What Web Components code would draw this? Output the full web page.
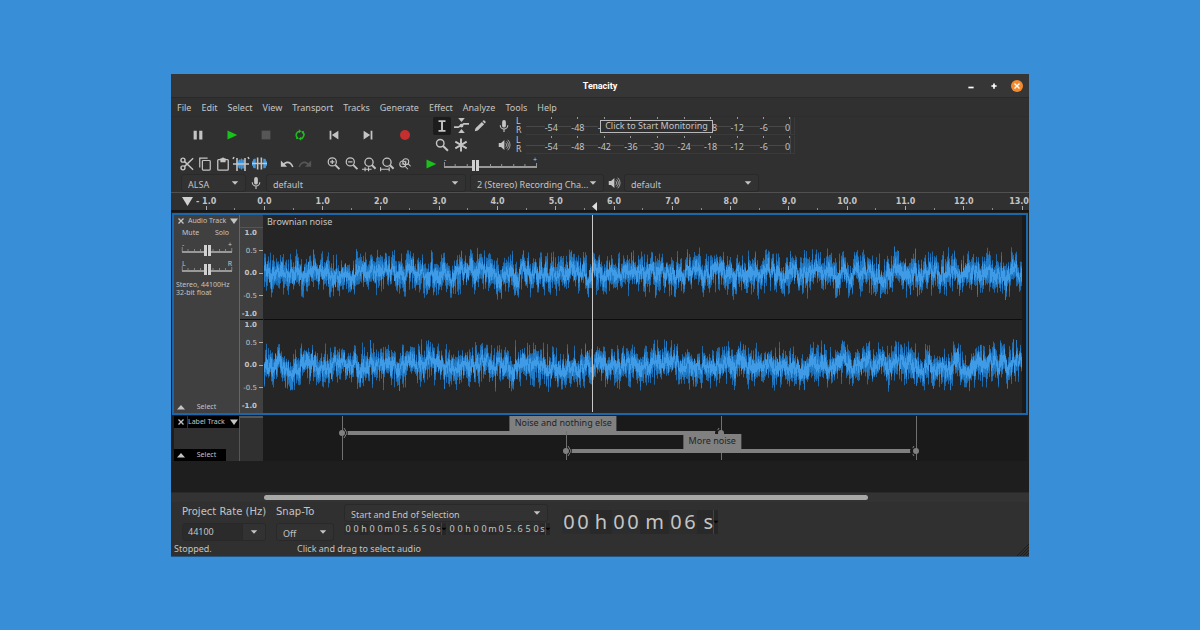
<!DOCTYPE html>
<html lang="en">
<head>
<meta charset="utf-8">
<meta name="viewport" content="width=device-width, initial-scale=1">
<title>Tenacity</title>
<style>
    * { box-sizing: border-box; }
    body {
        margin: 0;
        min-height: 100vh;
        display: flex;
        align-items: center;
        justify-content: center;
        background: #398fd7;
        font-family: "Noto Sans", "DejaVu Sans", sans-serif;
        font-size: 9px;
        line-height: 12px;
        color: #c4c4c4;
    }
    app-window { width: 71.5%; }
</style>
</head>
<body>
<app-window>
    <title-bar slot="title">Tenacity</title-bar>
    <menu-bar items="File,Edit,Select,View,Transport,Tracks,Generate,Effect,Analyze,Tools,Help"></menu-bar>
    <tool-area></tool-area>
    <time-ruler from="-1" to="13"></time-ruler>
    <track-area>
        <audio-track name="Audio Track" clip="Brownian noise"></audio-track>
        <label-track name="Label Track"></label-track>
    </track-area>
    <selection-bar></selection-bar>
    <status-bar state="Stopped.">Click and drag to select audio</status-bar>
</app-window>

<script>
// Icons are drawn on a 16x16 grid
const ICONS = {
    pause: '<path d="M3 3h3.6v10H3zM9.4 3H13v10H9.4z"/>',
    play: '<path d="M2 2v12L15 8z"/>',
    stop: '<path d="M3 3h10v10H3z"/>',
    loop: '<g fill="none" stroke="currentColor" stroke-width="2"><path d="M7.500 3A5.300 5.300 0 0 0 4.500 12.200M8.500 13A5.300 5.300 0 0 0 11.500 3.800"/></g><path d="M6.500 .3v5.400L9.800 3zM9.500 15.700v-5.400L6.200 13z"/><path d="M2.500 13.500l4-.5-2-3.500zM13.500 2.500l-4 .5 2 3.500z"/>',
    start: '<path d="M3 3h2v10H3zM13 3v10L5.500 8z"/>',
    end: '<path d="M11 3h2v10h-2zM3 3v10l7.500-5z"/>',
    record: '<circle cx="8" cy="8" r="5.700"/>',
    ibeam: '<path d="M4 1.500h8v2H9.100v9H12v2H4v-2h2.900v-9H4z"/>',
    envelope: '<path d="M4.500 0h7L8 4.200zM4.500 16h7L8 11.800z"/><path d="M0 9.800h4.500l6-3.600H16" fill="none" stroke="currentColor" stroke-width="1.800"/><circle cx="8" cy="8" r="2"/>',
    pencil: '<path d="M1 15l1-4 8.500-8.500 3 3L5 14zM11.300 1.700l1-1q.8-.7 1.600 0l1.400 1.400q.7.8 0 1.600l-1 1z"/>',
    zoom: '<circle cx="6" cy="6" r="4.300" fill="none" stroke="currentColor" stroke-width="1.600"/><path d="M9.200 9.200l5.600 5.300" stroke="currentColor" stroke-width="2.300"/>',
    multi: '<path d="M8 .5v15M1.500 4.200l13 7.600M1.500 11.800l13-7.600" stroke="currentColor" stroke-width="2.200"/>',
    mic: '<rect x="5.500" y="0" width="5" height="10" rx="2.500"/><path d="M3 7a5 5 0 0 0 10 0M8 12v4" fill="none" stroke="currentColor" stroke-width="1.500"/>',
    speaker: '<path d="M1 5.300h3l4.500-4v13.400l-4.500-4H1z"/><path d="M10 5a4 4 0 0 1 0 6M11.500 3a6.500 6.500 0 0 1 0 10M13 1a9.500 9.500 0 0 1 0 14" fill="none" stroke="currentColor" stroke-width="1"/>',
    cut: '<g fill="none" stroke="currentColor" stroke-width="1.600"><circle cx="3.400" cy="3.600" r="2.300"/><circle cx="3.400" cy="12.400" r="2.300"/><path d="M5 5l10 9.500M5 11l10-9.500"/></g>',
    copy: '<g fill="none" stroke="currentColor" stroke-width="1.400"><path d="M2 12V1.200h9"/><rect x="5" y="4" width="9" height="11" rx="1"/></g>',
    paste: '<g fill="none" stroke="currentColor" stroke-width="1.500"><rect x="2" y="3" width="12" height="12" rx="1"/></g><path d="M5 1.500h1.500a1.600 1.600 0 0 1 3 0H11V6H5z"/>',
    trim: '<path d="M5 6h1V4h1v2h1V3h1v3h1V4h1v8h-1v-2H9v3H8v-3H7v2H6v-2H5z" fill="#3d98e3" stroke="#3d98e3"/><path d="M0 8h16M4 2v13M12 2v13M1 1l-1 2M15 1l1 2" stroke="currentColor" stroke-width="1.600"/>',
    silence: '<path d="M0 6l1-1V4l1-1h2v10H2l-1-1v-1l-1-1zM16 6l-1-1V4l-1-1h-2v10h2l1-1v-1l1-1z" fill="#3d98e3"/><path d="M0 8h16M6 1.500v13M10 1.500v13" stroke="currentColor" stroke-width="1.700"/>',
    undo: '<path d="M1 4v7h7L5.500 8.400C8.500 6 12 7 13.800 11.600l1.700-.6C13 4.500 8 3.600 4 7z"/>',
    redo: '<path d="M15 4v7H8l2.500-2.600C7.500 6 4 7 2.200 11.600L.5 11C3 4.500 8 3.600 12 7z"/>',
    zoomIn: '<circle cx="6.500" cy="6" r="5" fill="none" stroke="currentColor" stroke-width="1.500"/><path d="M10.300 10l5 5" stroke="currentColor" stroke-width="2.300"/><path d="M3.800 6h5.400M6.500 3.300v5.400" stroke="currentColor" stroke-width="1.500"/>',
    zoomOut: '<circle cx="6.500" cy="6" r="5" fill="none" stroke="currentColor" stroke-width="1.500"/><path d="M10.300 10l5 5" stroke="currentColor" stroke-width="2.300"/><path d="M3.800 6h5.400" stroke="currentColor" stroke-width="1.500"/>',
    zoomSel: '<circle cx="8" cy="6" r="4.700" fill="none" stroke="currentColor" stroke-width="1.500"/><path d="M11.500 9.500l4 4" stroke="currentColor" stroke-width="2.300"/><path d="M0 14h11M3.500 11.800v4.400M7.500 11.800v4.400" stroke="currentColor" stroke-width="1.300"/>',
    zoomFit: '<circle cx="8" cy="6" r="4.700" fill="none" stroke="currentColor" stroke-width="1.500"/><path d="M11.500 9.500l4 4" stroke="currentColor" stroke-width="2.300"/><path d="M.7 14h10M.7 11.800v4.400M10.500 11.800v4.400" stroke="currentColor" stroke-width="1.300"/>',
    zoomToggle: '<g fill="none" stroke="currentColor" stroke-width="1.400"><circle cx="9" cy="5" r="4"/><circle cx="5" cy="8" r="4"/><path d="M3.500 8h3M9 3.500v4M12 7.500l3.500 3.500M8 11l4 4"/></g>',
    down: '<path d="M1.500 4.500h13L8 11.500z"/>',
    bigDown: '<path d="M0 3h16L8 14z"/>',
    up: '<path d="M0 13h16L8 4z"/>',
    close: '<path d="M3 3l10 10M13 3L3 13" stroke="currentColor" stroke-width="2.600"/>',
    minus: '<path d="M1 12h14" stroke="currentColor" stroke-width="4.500"/>',
    plus: '<path d="M1 8h14M8 1v14" stroke="currentColor" stroke-width="4.500"/>'
};

const icon = (name, size = 14) =>
    `<svg width="${size}" height="${size}" viewBox="0 0 16 16" fill="currentColor" aria-hidden="true">${ICONS[name]}</svg>`;

const RESET = `
    *, *::before, *::after { box-sizing: border-box; }
    svg { display: block; flex: none; overflow: visible; }
    button, select, input { font: inherit; color: inherit; margin: 0; border: 0; padding: 0; background: none; border-radius: 0; }
    button { display: flex; align-items: center; justify-content: center; }
`;

class BaseElement extends HTMLElement {
    connectedCallback() {
        if (this.shadowRoot) return;
        this.attachShadow({ mode: 'open' });
        this.shadowRoot.innerHTML = `<style>${RESET}</style>${this.render()}`;
    }
}

customElements.define('app-window', class extends BaseElement {
    render() {
        return `
            <style>
                :host { display: flex; flex-direction: column; background: #303030; }
            </style>
            <slot name="title"></slot>
            <slot></slot>
        `;
    }
});

customElements.define('title-bar', class extends BaseElement {
    render() {
        return `
            <style>
                :host {
                    display: grid;
                    grid-template-columns: 1fr auto 1fr;
                    align-items: center;
                    height: 24px;
                    padding: 1px 6px 0;
                    background: #363636;
                    border-bottom: 1px solid #2a2a2a;
                    color: #fff;
                }
                h1 { margin: 0; grid-column: 2; font: bold 9px/12px Roboto, "Noto Sans", sans-serif; }
                .buttons { display: flex; justify-content: flex-end; align-items: center; gap: 11px; }
                button { width: 12px; height: 12px; }
                .close { background: #f58a2c; border-radius: 50%; }
            </style>
            <h1><slot></slot></h1>
            <div class="buttons">
                <button aria-label="Minimize">${icon('minus', 6)}</button>
                <button aria-label="Maximize">${icon('plus', 6)}</button>
                <button class="close" aria-label="Close">${icon('close', 8)}</button>
            </div>
        `;
    }
});

customElements.define('menu-bar', class extends BaseElement {
    render() {
        const items = this.getAttribute('items').split(',');
        return `
            <style>
                :host { display: block; border-bottom: 1px solid #2d2d2d; }
                nav { display: flex; gap: 10px; height: 18px; padding: 2px 6px 0; align-items: center; }
            </style>
            <nav>${items.map(item => `<button>${item}</button>`).join('')}</nav>
        `;
    }
});

customElements.define('icon-button', class extends BaseElement {
    render() {
        const size = this.getAttribute('size') || 14;
        return `
            <style>
                :host { display: block; width: 18px; height: 18px; }
                :host([wide]) { width: 34px; }
                :host([active]) { background: #1c1c1c; border-radius: 2px; }
                button { width: 100%; height: 100%; }
            </style>
            <button aria-label="${this.getAttribute('label')}">${icon(this.getAttribute('icon'), size)}</button>
        `;
    }
});

customElements.define('level-meter', class extends BaseElement {
    render() {
        const marks = [-54, -48, -42, -36, -30, -24, -18, -12, -6];
        const prompt = this.getAttribute('prompt');
        // The prompt takes the place of the middle marks
        const shown = m => !prompt || m < -36 || m > -24;
        return `
            <style>
                :host { display: flex; align-items: center; height: 18px; position: relative; }
                .channels { width: 10px; margin-left: 6px; font: 8px/9px "DejaVu Sans", sans-serif; }
                .channels span { display: block; }
                .scale {
                    display: flex;
                    width: 269px;
                    height: 18px;
                    padding-left: 12px;
                    border: solid #3a3a3a;
                    border-width: 0 1px 1px 0;
                    background: linear-gradient(#484848, #484848) 0 9px / 265px 1px no-repeat;
                }
                .scale span {
                    flex: 1;
                    display: flex;
                    justify-content: center;
                    background: linear-gradient(#999, #999) 50% 0 / 1px 2px no-repeat;
                }
                .scale b { font-weight: normal; background: #303030; height: 13px; line-height: 13px; margin-top: 4px; }
                .scale .zero { flex: none; width: 14px; margin-right: 3px; justify-content: flex-end; background-position: 100% 0; border-right: 1px solid #444; }
                button {
                    position: absolute;
                    left: 102px;
                    top: 3px;
                    width: 113px;
                    height: 13px;
                    border: 1px solid #b8b8b8;
                    background: #303030;
                    white-space: nowrap;
                }
            </style>
            ${icon(this.getAttribute('icon'), 12)}
            <div class="channels"><span>L</span><span>R</span></div>
            <div class="scale">
                ${marks.map(m => `<span>${shown(m) ? `<b>${m}</b>` : ''}</span>`).join('')}
                <span class="zero"><b>0</b></span>
            </div>
            ${prompt ? `<button>${prompt}</button>` : ''}
        `;
    }
});

customElements.define('scale-slider', class extends BaseElement {
    render() {
        return `
            <style>
                :host { display: block; font-size: 7px; line-height: 7px; }
                .ends { display: flex; justify-content: space-between; height: 5px; align-items: center; }
                .rail { position: relative; height: 9px; }
                svg { position: absolute; left: 0; top: 0; width: 100%; height: 100%; }
                input {
                    -webkit-appearance: none;
                    appearance: none;
                    position: relative;
                    display: block;
                    width: 100%;
                    height: 7px;
                    overflow: visible;
                }
                input::-webkit-slider-thumb {
                    -webkit-appearance: none;
                    width: 7px;
                    height: 11px;
                    background: linear-gradient(90deg, #d0d0d0 3px, #333 3px 4px, #d0d0d0 4px);
                }
            </style>
            <div class="ends"><span>${this.getAttribute('low')}</span><span>${this.getAttribute('high')}</span></div>
            <div class="rail">
                <svg viewBox="0 0 100 9" preserveAspectRatio="none">
                    <path d="M0 5H100" stroke="#999" stroke-width="2"/>
                    <path d="M.5 0V5M99.500 1V5M12 2V5M25 2V5M37 2V5M50 2V5M62 2V5M75 2V5M87 2V5" stroke="#999" stroke-width="1"/>
                </svg>
                <input type="range" min="0" max="100" value="${this.getAttribute('value')}" aria-label="${this.getAttribute('label')}">
            </div>
        `;
    }
});

customElements.define('drop-down', class extends BaseElement {
    render() {
        const caption = this.getAttribute('caption');
        return `
            <style>
                :host { display: block; }
                label { display: block; font: 10px/15px "DejaVu Sans", sans-serif; margin-bottom: 4px; white-space: nowrap; }
                .box {
                    position: relative;
                    height: 18px;
                    border: 1px solid #292929;
                    border-radius: 3px;
                    background: #323232;
                    overflow: hidden;
                }
                select {
                    -webkit-appearance: none;
                    appearance: none;
                    width: 100%;
                    height: 100%;
                    padding: 4px 10px 0 6px;
                }
                svg { position: absolute; right: 6px; top: 4px; pointer-events: none; }
            </style>
            ${caption ? `<label for="field">${caption}</label>` : ''}
            <div class="box">
                <select id="field" ${caption ? '' : `aria-label="${this.getAttribute('label')}"`}>
                    <option>${this.getAttribute('value')}</option>
                </select>
                ${icon('down', 8)}
            </div>
        `;
    }
});

customElements.define('combo-field', class extends BaseElement {
    render() {
        return `
            <style>
                :host { display: block; }
                label { display: block; font: 10px/15px "DejaVu Sans", sans-serif; margin-bottom: 4px; white-space: nowrap; }
                .box { display: flex; height: 18px; border: 1px solid #292929; border-radius: 3px; overflow: hidden; }
                input { flex: 1; min-width: 0; padding: 0 5px; background: #2b2b2b; }
                button { width: 23px; background: #323232; border-left: 1px solid #292929; }
            </style>
            <label for="field">${this.getAttribute('caption')}</label>
            <div class="box">
                <input id="field" value="${this.getAttribute('value')}">
                <button aria-label="Choose rate">${icon('down', 8)}</button>
            </div>
        `;
    }
});

customElements.define('tool-area', class extends BaseElement {
    render() {
        return `
            <style>
                :host { display: block; padding: 0 7px; }
                .row { display: flex; align-items: center; }
                .top { height: 37px; padding-left: 3px; }
                .transport { display: flex; }
                .record { margin-left: 3px; }
                .tools { display: grid; grid-template-columns: repeat(3, 18px); gap: 1px; margin-left: 11px; }
                .meters { display: grid; gap: 1px; margin-left: 9px; }
                .edit { height: 20px; }
                .group { display: flex; margin-right: 10px; }
                .speed { width: 93px; margin-left: 4px; }
                .group.view { margin-right: 8px; }
                .devices { height: 18px; padding-left: 3px; gap: 4px; }
                .green { color: #19c219; }
                .dim { color: #565656; }
                .red { color: #c62f2f; }
            </style>
            <div class="row top">
                <div class="transport">
                    <icon-button wide icon="pause" label="Pause"></icon-button>
                    <icon-button wide icon="play" label="Play" class="green" size="12"></icon-button>
                    <icon-button wide icon="stop" label="Stop" class="dim"></icon-button>
                    <icon-button wide icon="loop" label="Loop" class="green" size="12"></icon-button>
                    <icon-button wide icon="start" label="Skip to Start"></icon-button>
                    <icon-button wide icon="end" label="Skip to End"></icon-button>
                    <icon-button wide icon="record" label="Record" class="red record"></icon-button>
                </div>
                <div class="tools">
                    <icon-button active icon="ibeam" label="Selection Tool" size="14"></icon-button>
                    <icon-button icon="envelope" label="Envelope Tool" size="15"></icon-button>
                    <icon-button icon="pencil" label="Draw Tool" size="12"></icon-button>
                    <icon-button icon="zoom" label="Zoom Tool"></icon-button>
                    <icon-button icon="multi" label="Multi Tool"></icon-button>
                </div>
                <div class="meters">
                    <level-meter icon="mic" prompt="Click to Start Monitoring"></level-meter>
                    <level-meter icon="speaker"></level-meter>
                </div>
            </div>
            <div class="row edit">
                <div class="group">
                    <icon-button icon="cut" label="Cut"></icon-button>
                    <icon-button icon="copy" label="Copy"></icon-button>
                    <icon-button icon="paste" label="Paste"></icon-button>
                    <icon-button icon="trim" label="Trim Audio" size="16"></icon-button>
                    <icon-button icon="silence" label="Silence Audio" size="15"></icon-button>
                </div>
                <div class="group">
                    <icon-button icon="undo" label="Undo"></icon-button>
                    <icon-button icon="redo" label="Redo" class="dim"></icon-button>
                </div>
                <div class="group view">
                    <icon-button icon="zoomIn" label="Zoom In" size="13"></icon-button>
                    <icon-button icon="zoomOut" label="Zoom Out" size="13"></icon-button>
                    <icon-button icon="zoomSel" label="Zoom to Selection"></icon-button>
                    <icon-button icon="zoomFit" label="Fit to Width"></icon-button>
                    <icon-button icon="zoomToggle" label="Zoom Toggle" size="12"></icon-button>
                </div>
                <icon-button icon="play" label="Play-at-Speed" class="green" size="12"></icon-button>
                <scale-slider class="speed" low="-" high="+" value="32" label="Playback Speed"></scale-slider>
            </div>
            <div class="row devices">
                <drop-down style="width: 65px" value="ALSA" label="Audio Host"></drop-down>
                ${icon('mic', 12)}
                <drop-down style="width: 200px" value="default" label="Recording Device"></drop-down>
                <drop-down style="width: 134px" value="2 (Stereo) Recording Cha..." label="Recording Channels"></drop-down>
                ${icon('speaker', 12)}
                <drop-down style="width: 135px" value="default" label="Playback Device"></drop-down>
            </div>
        `;
    }
});

customElements.define('time-ruler', class extends BaseElement {
    render() {
        const from = Number(this.getAttribute('from'));
        const to = Number(this.getAttribute('to'));
        const cells = [];
        for (let t = from; t < to; t++) {
            cells.push(`<span>${t < 0 ? '- ' : ''}${Math.abs(t).toFixed(1)}</span>`);
        }
        return `
            <style>
                :host {
                    display: flex;
                    position: relative;
                    height: 20px;
                    padding-left: 6px;
                    border-top: 1px solid #505050;
                    border-bottom: 2px solid #161616;
                    font: bold 8px/17px "DejaVu Sans", sans-serif;
                }
                span {
                    flex: 1;
                    text-align: center;
                    background:
                        linear-gradient(#aaa, #aaa) 50% 100% / 1px 4px no-repeat,
                        linear-gradient(#888, #888) 100% 100% / 1px 2px no-repeat;
                }
                .last { flex: none; width: 36px; text-align: right; background-position: 29px 100%, -9px 0; }
                .pin { position: absolute; left: 11px; top: 4px; }
                .head { position: absolute; left: 49.1%; top: 9px; color: #ddd; }
            </style>
            ${cells.join('')}
            <span class="last">${to.toFixed(1)}</span>
            <svg class="pin" width="11" height="9" viewBox="0 0 11 9" fill="#d0d0d0"><path d="M0 0h11L5.500 9z"/></svg>
            <svg class="head" width="6" height="9" viewBox="0 0 6 9" fill="currentColor"><path d="M5 0v9L0 4.500z"/></svg>
        `;
    }
});

customElements.define('track-area', class extends BaseElement {
    render() {
        return `
            <style>
                :host { display: block; background: #1e1e1e; }
                .tracks { min-height: 280px; padding: 1px 1px 0; }
                .scroll { height: 10px; padding: 2px 0 3px 93px; background: #333; border-top: 1px solid #2a2a2a; }
                .thumb { width: 79%; height: 5px; border-radius: 3px; background: #a8a8a6; }
            </style>
            <div class="tracks"><slot></slot></div>
            <div class="scroll"><div class="thumb"></div></div>
        `;
    }
});

customElements.define('track-panel', class extends BaseElement {
    render() {
        return `
            <style>
                :host {
                    display: flex;
                    flex-direction: column;
                    width: 65px;
                    background: var(--panel, #404040);
                    font-size: 7px;
                    line-height: 8px;
                }
                header { display: flex; height: 12px; background: var(--bar, #404040); }
                .close { width: 13px; }
                .name { flex: 1; justify-content: space-between; padding: 0 1px 0 0; white-space: nowrap; border-left: 1px solid var(--edge, #404040); }
                .body { flex: 1; }
                footer { display: flex; width: 52px; height: 12px; background: var(--bar, #404040); }
                .fold { width: 13px; }
                .pick { flex: 1; }
            </style>
            <header>
                <button class="close" aria-label="Close track">${icon('close', 8)}</button>
                <button class="name"><span>${this.getAttribute('name')}</span>${icon('bigDown', 8)}</button>
            </header>
            <div class="body"><slot></slot></div>
            <footer>
                <button class="fold" aria-label="Collapse">${icon('up', 8)}</button>
                <button class="pick">Select</button>
            </footer>
        `;
    }
});

customElements.define('wave-form', class extends BaseElement {
    render() {
        // Seeded generator, so each channel always gets the same noise
        let seed = Number(this.getAttribute('seed'));
        const rand = () => {
            seed = (seed * 16807) % 2147483647;
            return seed / 2147483647;
        };
        let peaks = '';
        let mids = '';
        let rms = '';
        let drift = 0;
        for (let x = 0; x < 758; x++) {
            drift = drift * 0.6 + (rand() - 0.5) * 13;
            const up = 6 + rand() * 8 + Math.pow(rand(), 4) * 14;
            const down = 6 + rand() * 8 + Math.pow(rand(), 4) * 14;
            const top = Math.max(19 + rand() * 6, 45.5 + drift - up);
            const bottom = Math.min(72 - rand() * 6, 45.5 + drift + down);
            const body = 2 + rand() * 6;
            peaks += `M${x + 0.5} ${top.toFixed(1)}V${bottom.toFixed(1)}`;
            mids += `M${x + 0.5} ${(45.5 + drift - up * 0.7).toFixed(1)}V${(45.5 + drift + down * 0.7).toFixed(1)}`;
            rms += `M${x + 0.5} ${(45.5 + drift * 0.9 - body).toFixed(1)}V${(45.5 + drift * 0.9 + body).toFixed(1)}`;
        }
        return `
            <style>
                :host { display: block; }
                svg { width: 100%; height: 91px; }
            </style>
            <svg viewBox="0 0 758 91" preserveAspectRatio="none" fill="none">
                <path d="${peaks}" stroke="#1f66a5"/>
                <path d="${mids}" stroke="#237cc7"/>
                <path d="${rms}" stroke="#3f9be6"/>
            </svg>
        `;
    }
});

customElements.define('audio-track', class extends BaseElement {
    render() {
        const scale = `
            <div class="scale">
                <b>1.0</b><span class="tick">0.5</span><b class="tick">0.0</b><span class="tick">-0.5</span><b>-1.0</b>
            </div>
        `;
        return `
            <style>
                :host {
                    display: grid;
                    grid-template-columns: 65px 24px 1fr;
                    position: relative;
                    border: 2px solid #1c66ab;
                    background: #1a1a1a;
                }
                .controls { display: grid; gap: 5px; padding: 2px 7px 0 8px; }
                .switches { display: flex; justify-content: space-between; padding-right: 3px; }
                .info { padding: 6px 2px; }
                .rulers { border-left: 1px solid #666; background: #404040; }
                .scale {
                    display: grid;
                    grid-template-rows: 10px 26fr 19fr 26fr 10px;
                    height: 91px;
                    align-items: center;
                    text-align: right;
                    font: 7px/10px "DejaVu Sans", sans-serif;
                }
                .scale > * { padding-right: 6px; }
                .tick { background: linear-gradient(#aaa, #aaa) 100% 50% / 4px 1px no-repeat; }
                .head { height: 13px; border-bottom: 1px solid #555; }
                .line { height: 1px; background: #0c0c0c; }
                .clips { margin-right: 4px; padding-left: 1px; background: #252525; }
                .clips .head { border: 0; padding-left: 3px; line-height: 13px; }
                .cursor { position: absolute; left: 49.1%; top: 0; bottom: 1px; width: 1px; background: #c8c8c8; }
                .foot { height: 2px; }
            </style>
            <track-panel name="${this.getAttribute('name')}">
                <div class="controls">
                    <div class="switches"><button>Mute</button><button>Solo</button></div>
                    <scale-slider low="-" high="+" value="50" label="Gain"></scale-slider>
                    <scale-slider low="L" high="R" value="50" label="Pan"></scale-slider>
                </div>
                <div class="info">Stereo, 44100Hz<br>32-bit float</div>
            </track-panel>
            <div class="rulers">
                <div class="head"></div>${scale}<div class="line"></div>${scale}
            </div>
            <div class="clips">
                <div class="head">${this.getAttribute('clip')}</div>
                <wave-form seed="4711"></wave-form>
                <div class="line"></div>
                <wave-form seed="90210"></wave-form>
                <div class="foot"></div>
            </div>
            <div class="cursor"></div>
        `;
    }
});

customElements.define('label-track', class extends BaseElement {
    render() {
        // start and end are percentages of the visible time span
        const labels = [
            { text: 'Noise and nothing else', start: 10.4, end: 59.9, mid: 39.3, top: 0 },
            { text: 'More noise', start: 39.7, end: 85.5, mid: 58.8, top: 18 }
        ];
        const handle = '<path d="M0 0L3 5L0 10" fill="none" stroke="currentColor"/>';
        return `
            <style>
                :host { display: grid; grid-template-columns: 65px 24px 1fr; margin: 1px 1px 0 2px; }
                track-panel { --panel: #303030; --bar: #000; --edge: #333; height: 45px; }
                .ruler { background: #303030; border: solid #555; border-width: 2px 0 0 1px; }
                .lane { position: relative; background: #1a1a1a; color: #808080; }
                .label { position: absolute; height: 19px; border-bottom: 4px solid #808080; }
                .label::before, .label::after { content: ""; position: absolute; bottom: -5px; width: 6px; height: 6px; border-radius: 50%; background: #808080; }
                .label::before { left: -3px; box-shadow: 3px 0 0 #1a1a1a; }
                .label::after { right: -3px; box-shadow: -3px 0 0 #1a1a1a; }
                .hook { position: absolute; bottom: -7px; }
                .hook.left { left: 2px; }
                .hook.right { right: 2px; transform: scaleX(-1); }
                .edge { position: absolute; top: 0; bottom: 1px; width: 1px; background: #707070; }
                .text { position: absolute; top: 0; height: 15px; transform: translateX(-50%); padding: 0 5px; line-height: 14px; white-space: nowrap; background: #808080; color: #252525; }
            </style>
            <track-panel name="${this.getAttribute('name')}"></track-panel>
            <div class="ruler"></div>
            <div class="lane">
                ${labels.map(l => `
                    <div class="edge" style="left: ${l.start}%"></div>
                    <div class="edge" style="left: ${l.end}%"></div>
                    <div class="label" style="left: ${l.start}%; width: ${l.end - l.start}%; top: ${l.top}px">
                        <svg class="hook left" width="4" height="10" viewBox="0 0 4 10">${handle}</svg>
                        <svg class="hook right" width="4" height="10" viewBox="0 0 4 10">${handle}</svg>
                    </div>
                `).join('')}
                ${labels.map(l => `<span class="text" style="left: ${l.mid}%; margin-top: ${l.top}px">${l.text}</span>`).join('')}
            </div>
        `;
    }
});

customElements.define('time-field', class extends BaseElement {
    render() {
        const kind = c => (c === '.' ? 'dot' : /\d/.test(c) ? 'digit' : `unit ${c}`);
        const cells = [...this.getAttribute('value')].map(c => `<span class="${kind(c)}">${c}</span>`).join('');
        return `
            <style>
                :host { display: flex; height: 12px; font-size: 9px; line-height: 12px; background: #2d2d2d; }
                span { width: 8px; text-align: center; }
                .unit { background: #292929; }
                .m { width: 9px; }
                .s { width: 5px; }
                .dot { width: 3px; }
                button { width: 5px; background: #262626; border-left: 1px solid #444; color: #000; }
                :host([large]) { height: 24px; font-size: 20px; line-height: 24px; }
                :host([large]) span { width: 14px; }
                :host([large]) .h { width: 22px; }
                :host([large]) .m { width: 29px; }
                :host([large]) .s { width: 16px; text-align: right; }
            </style>
            ${cells}<button aria-label="Time format">${icon('down', 6)}</button>
        `;
    }
});

customElements.define('selection-bar', class extends BaseElement {
    render() {
        return `
            <style>
                :host { display: flex; gap: 10px; height: 39px; padding: 2px 11px 0; }
                .rate { width: 84px; }
                .snap { width: 58px; }
                .range { width: 204px; }
                .times { display: flex; gap: 2px; margin-top: 1px; }
                .position { margin: 6px 0 0 4px; }
            </style>
            <combo-field class="rate" caption="Project Rate (Hz)" value="44100"></combo-field>
            <drop-down class="snap" caption="Snap-To" value="Off"></drop-down>
            <div class="range">
                <drop-down value="Start and End of Selection" label="Selection mode"></drop-down>
                <div class="times">
                    <time-field value="00h00m05.650s"></time-field>
                    <time-field value="00h00m05.650s"></time-field>
                </div>
            </div>
            <div class="position"><time-field large value="00h00m06s"></time-field></div>
        `;
    }
});

customElements.define('status-bar', class extends BaseElement {
    render() {
        return `
            <style>
                :host { display: flex; height: 16px; padding-left: 3px; line-height: 16px; border-bottom: 1px solid #25557f; }
                .state { width: 123px; }
                .hint { flex: 1; }
                svg { align-self: flex-end; overflow: hidden; }
            </style>
            <span class="state">${this.getAttribute('state')}</span>
            <span class="hint"><slot></slot></span>
            <svg width="13" height="13" viewBox="0 0 13 13" stroke="#1c1c1c"><path d="M1 13L13 1M4 13L13 4M7 13L13 7M10 13L13 10"/></svg>
        `;
    }
});
</script>
</body>
</html>
